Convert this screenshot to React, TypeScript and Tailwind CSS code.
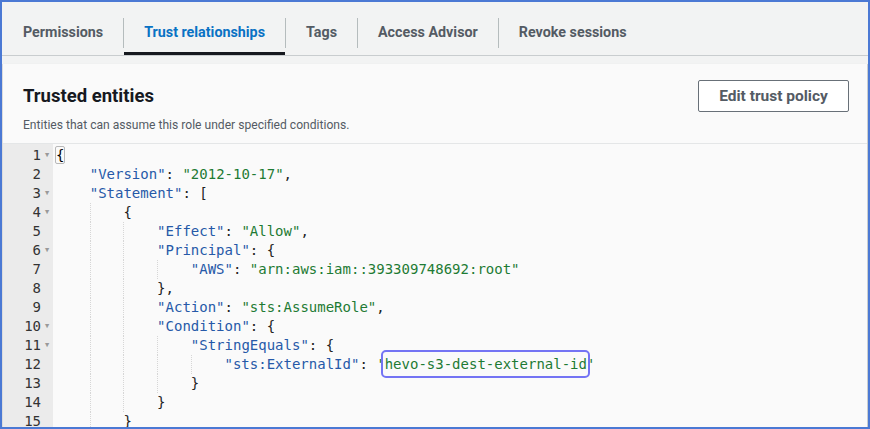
import React from "react";

type Tok = { t: string; c: "k" | "s" | "p" | "h" | "b" };

const K = (t: string): Tok => ({ t, c: "k" });
const S = (t: string): Tok => ({ t, c: "s" });
const P = (t: string): Tok => ({ t, c: "p" });

const lines: { indent: number; fold?: boolean; toks: Tok[] }[] = [
  { indent: 0, fold: true, toks: [{ t: "{", c: "b" }] },
  { indent: 1, toks: [K('"Version"'), P(": "), S('"2012-10-17"'), P(",")] },
  { indent: 1, fold: true, toks: [K('"Statement"'), P(": [")] },
  { indent: 2, fold: true, toks: [P("{")] },
  { indent: 3, toks: [K('"Effect"'), P(": "), S('"Allow"'), P(",")] },
  { indent: 3, fold: true, toks: [K('"Principal"'), P(": {")] },
  { indent: 4, toks: [K('"AWS"'), P(": "), S('"arn:aws:iam::393309748692:root"')] },
  { indent: 3, toks: [P("},")] },
  { indent: 3, toks: [K('"Action"'), P(": "), S('"sts:AssumeRole"'), P(",")] },
  { indent: 3, fold: true, toks: [K('"Condition"'), P(": {")] },
  { indent: 4, fold: true, toks: [K('"StringEquals"'), P(": {")] },
  {
    indent: 5,
    toks: [K('"sts:ExternalId"'), P(": "), S("'"), { t: "hevo-s3-dest-external-id", c: "h" }, S("'")],
  },
  { indent: 4, toks: [P("}")] },
  { indent: 3, toks: [P("}")] },
  { indent: 2, toks: [P("}")] },
];

const tabs = ["Permissions", "Trust relationships", "Tags", "Access Advisor", "Revoke sessions"];

function Token({ tok }: { tok: Tok }) {
  if (tok.c === "k") return <span className="text-[#2659a8]">{tok.t}</span>;
  if (tok.c === "s") return <span className="text-[#1e7b34]">{tok.t}</span>;
  if (tok.c === "b")
    return <span className="border border-[#b8b8b8] rounded-[2px] -ml-[1px]">{tok.t}</span>;
  if (tok.c === "h")
    return (
      <span className="relative text-[#1e7b34]">
        {tok.t}
        <span className="absolute -left-[4px] -right-[3px] -top-[6px] -bottom-[6px] border-2 border-[#7474f4] rounded-[5px]" />
      </span>
    );
  return <span className="text-[#222]">{tok.t}</span>;
}

export default function App() {
  return (
    <div
      className="w-[870px] h-[429px] overflow-hidden border-2 border-[#4b79d4] bg-[#f2f3f3] flex flex-col"
      style={{ fontFamily: "Roboto, 'Open Sans', sans-serif" }}
    >
      {/* tabs */}
      <div className="h-[54px] shrink-0 border-b border-[#c9cdcf] flex items-end pl-[1px]">
        {tabs.map((tab, i) => (
          <React.Fragment key={tab}>
            {i > 0 && <div className="w-px h-[30px] bg-[#b5bcbd] self-end mb-[7px]" />}
            <div
              className={
                "h-[46px] pt-[4px] px-5 flex items-center border-b-[3px] text-[14.3px] font-bold " +
                (i === 1 ? "border-[#16191f] text-[#0972c4]" : "border-transparent text-[#545b64]")
              }
            >
              {tab}
            </div>
          </React.Fragment>
        ))}
      </div>

      {/* panel */}
      <div className="mt-[8px] flex-1 bg-[#fafafa] border-l border-[#dcdcdc] border-r border-r-[#c9cdcf] shadow-[0_1px_2px_rgba(0,0,0,0.12)] flex flex-col">
        <div className="px-5 pt-4 pb-[10px] flex justify-between items-start">
          <div>
            <h2 className="mt-[5px] text-[18.5px] leading-[22px] font-bold text-[#16191f]">Trusted entities</h2>
            <p className="mt-[10px] text-[12.1px] leading-[16px] text-[#545b64]">
              Entities that can assume this role under specified conditions.
            </p>
          </div>
          <button className="h-[32px] w-[151px] pt-[1px] border border-[#687078] rounded-[2px] bg-white text-[15.5px] font-bold text-[#545b64] mr-[-2px]">
            Edit trust policy
          </button>
        </div>

        {/* editor */}
        <div
          className="flex-1 border-t border-[#e4e6e7] flex text-[14px] leading-[19px]"
          style={{ fontFamily: "'DejaVu Sans Mono', 'Liberation Mono', monospace" }}
        >
          <div className="w-[50px] shrink-0 bg-[#ebebeb] pt-[2px] text-[#333]">
            {lines.map((l, i) => (
              <div key={i} className="h-[19px] flex">
                <span className="w-[38px] text-right">{i + 1}</span>
                <span className="w-[12px] text-[7px] text-[#999] pl-[4px] leading-[19px]">{l.fold ? "▼" : ""}</span>
              </div>
            ))}
          </div>
          <div className="pl-[3px] pt-[2px] whitespace-pre">
            {lines.map((l, i) => (
              <div key={i} className="h-[19px] flex">
                {Array.from({ length: l.indent }).map((_, j) => (
                  <span
                    key={j}
                    className={
                      "inline-block w-[4ch] h-[19px] shrink-0 " +
                      (j > 0 ? "border-l border-dotted border-[#d6d6d6]" : "")
                    }
                  />
                ))}
                <span>
                  {l.toks.map((tok, j) => (
                    <Token key={j} tok={tok} />
                  ))}
                </span>
              </div>
            ))}
          </div>
        </div>
      </div>
    </div>
  );
}
